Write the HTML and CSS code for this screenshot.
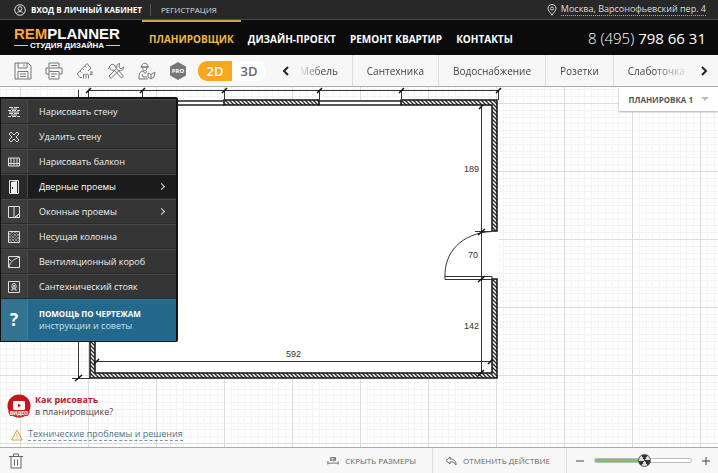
FILE: index.html
```
<!DOCTYPE html>
<html lang="ru">
<head>
	<title>Remplanner</title>
	<meta charset="utf-8">
	<meta name="viewport" content="width=device-width, initial-scale=1">
	<link rel="stylesheet" href="styles.css">
</head>
<body>
<div class="topbar">
	<svg class="user" width="12" height="12" viewBox="0 0 12 12"><circle cx="6" cy="6" r="5.3"/><circle cx="6" cy="4.6" r="1.9"/><path d="M2.5 9.8c.4-3 6.6-3 7 0"/></svg>
	<a class="login" href="#">ВХОД В ЛИЧНЫЙ КАБИНЕТ</a>
	<a class="reg" href="#">РЕГИСТРАЦИЯ</a>
	<svg class="pin" width="10" height="12" viewBox="0 0 10 12"><path d="M5 11.2C3.5 8.6 1 7 1 4.6a4 4 0 0 1 8 0C9 7 6.500 8.600 5 11.200z"/><circle cx="5" cy="4.600" r="1.500"/></svg>
	<a class="address" href="#">Москва, Варсонофьевский пер. 4</a>
</div>

<header class="header">
	<a class="logo" href="#">
		<span class="logo-name"><b>REM</b>PLANNER</span>
		<span class="logo-sub">СТУДИЯ ДИЗАЙНА</span>
	</a>
	<nav class="nav">
		<a class="active" href="#">ПЛАНИРОВЩИК</a>
		<a href="#">ДИЗАЙН-ПРОЕКТ</a>
		<a href="#">РЕМОНТ КВАРТИР</a>
		<a href="#">КОНТАКТЫ</a>
	</nav>
	<div class="phone"><span>8 (495)</span> 798 66 31</div>
</header>

<div class="toolbar">
	<div class="tools">
		<button type="button" aria-label="Сохранить"><svg width="18" height="18" viewBox="0 0 18 18"><path d="M1 1h13l3 3v13H1zM4 1v5h9V1M10 2.500v2M4 17V9.500h10V17M6 12h6M6 14.500h6"/></svg></button>
		<button type="button" aria-label="Печать"><svg width="18" height="18" viewBox="0 0 18 18"><path d="M4 6V1h10v5M4 12H1V6h16v6h-3M4 9.500h10V17H4zM6 12h6M6 14.500h4M3 8h2M6 3.500h6"/></svg></button>
		<button type="button" aria-label="Площадь"><svg width="18" height="18" viewBox="0 0 18 18"><path d="M6 15.500H4L1 12 11 1.500l4 4.500-3 3M4 9l1.500 1.500M6.500 6.500L8 8M9 4l1.500 1.500M7.500 16.500V12M7.500 13c1-1.500 2.500-1 2.500.5v3M10 13c1-1.500 2.500-1 2.500.5v3M14 10h2.500L14 12.500h2.500"/></svg></button>
		<button type="button" aria-label="Инструменты"><svg width="18" height="18" viewBox="0 0 18 18"><path d="M2 5l3-3 3 1.500 1 2.500 7.500 8-2 2-7.500-8-2 .5L3.500 7zM1 7l2.500-2M12.500 1.500c-3 .5-3 3-2.500 4.500L2 14l2 2.500 8-8c2 .5 4.500 0 4.500-3.500l-2.500 2-2-2z"/></svg></button>
		<button type="button" aria-label="Мастер"><svg width="18" height="18" viewBox="0 0 18 18"><path d="M3.500 5C3.500 0 10 0 10 5zM2.500 5H11M4.500 5c0 5 4.500 5 4.500 0M5 9c-3 .5-4 2-4 8h9M5 9l2 2.500L9 9M4 12l1 3h4M10 11l3 1.500L17 10l-1 5-3 2-3-2zM13 12.500V17"/></svg></button>
		<button type="button" aria-label="PRO"><svg class="pro" width="18" height="18" viewBox="0 0 18 18"><path d="M9 0l8 4.500v9L9 18l-8-4.500v-9z"/><text x="9" y="11">PRO</text></svg></button>
	</div>
	<div class="mode">
		<button class="on" type="button">2D</button>
		<button type="button">3D</button>
	</div>
	<button class="arrow" type="button" aria-label="Назад"><svg width="8" height="10" viewBox="0 0 8 10"><path d="M6 1L2 5l4 4"/></svg></button>
	<div class="tabs">
		<a href="#">Мебель</a>
		<a href="#">Сантехника</a>
		<a href="#">Водоснабжение</a>
		<a href="#">Розетки</a>
		<a href="#">Слаботочка</a>
	</div>
	<button class="arrow" type="button" aria-label="Вперёд"><svg width="8" height="10" viewBox="0 0 8 10"><path d="M2 1l4 4-4 4"/></svg></button>
</div>

<main class="canvas">
	<svg class="plan">
		<defs>
			<pattern id="grid" x="20" y="16" width="68" height="68" patternUnits="userSpaceOnUse">
				<path class="minor" d="M7.500 0v68M14.500 0v68M20.500 0v68M27.500 0v68M34.500 0v68M41.500 0v68M48.500 0v68M54.500 0v68M61.500 0v68M0 7.500h68M0 14.500h68M0 20.500h68M0 27.500h68M0 34.500h68M0 41.500h68M0 48.500h68M0 54.500h68M0 61.500h68"/>
				<path class="major" d="M.5 0v68M0 .5h68"/>
			</pattern>
			<pattern id="hatch" width="4" height="4" patternUnits="userSpaceOnUse">
				<path class="hatch" d="M-1 -1l6 6M-1 3l2 2M3 -1l2 2"/>
			</pattern>
		</defs>
		<rect class="paper" width="100%" height="100%"/>

		<!-- room -->
		<path class="floor" d="M89 13h409v279H89z"/>
		<!-- windows -->
		<path class="window" d="M95 14h129M95 18h129M319 14h82M319 18h82"/>
		<!-- walls -->
		<g class="wall">
			<path d="M224 13h95v5h-95z"/>
			<path d="M401 13h96v131h-5V18h-91z"/>
			<path d="M492 192h5v99H90V13h5v273h397z"/>
		</g>
		<!-- door -->
		<path class="line" d="M492 189.500h-47v3h47zM445 190c-1-24 16-44 47-45.500"/>
		<!-- sizes -->
		<path class="line" d="M88 3.500h410M88.500 3v10M142.500 3v10M224.500 3v14M319.500 3v14M401.500 3v14M498.500 3v10"/>
		<path class="tick" d="M86 6l5-5M140 6l5-5M222 6l5-5M317 6l5-5M399 6l5-5M496 6l5-5"/>
		<path class="line" d="M481.500 20v267M95 274.500h397M78.500 3v288M72 291.500h18M475 144.500h17M475 192.500h17"/>
		<path class="tick" d="M479 22l4-4M478 148l7-6M478 195l7-6M478 289l6-6M488 277l5-5M94 277l5-5M75 294l7-6"/>
		<text class="size" x="464" y="85">189</text>
		<text class="size" x="468" y="171">70</text>
		<text class="size" x="464" y="242">142</text>
		<text class="size" x="286" y="270">592</text>
	</svg>

	<button class="variant" type="button">ПЛАНИРОВКА 1<i></i></button>

	<div class="menu">
		<a href="#"><span><svg width="12" height="12" viewBox="0 0 12 12"><path d="M1 1.500h4M6 1.500h5M0 4.500h3M4 4.500h4M9 4.500h3M1 7.500h4M6 7.500h5M0 10.500h3M4 10.500h4M9 10.500h3M3 3h6M1 6h10M3 9h6"/></svg></span>Нарисовать стену</a>
		<a href="#"><span><svg width="12" height="12" viewBox="0 0 12 12"><path d="M3 1l3 3 3-3 2 2-3 3 3 3-2 2-3-3-3 3-2-2 3-3-3-3z"/></svg></span>Удалить стену</a>
		<a href="#"><span><svg width="12" height="12" viewBox="0 0 12 12"><path d="M.5 2h11v8H.5zM0 7.500h12M3 2v8M6 2v8M9 2v8"/></svg></span>Нарисовать балкон</a>
		<a class="open" href="#"><span><svg width="12" height="14" viewBox="0 0 12 14"><path d="M1.500 13.500V.5h9v13z"/><path class="full" d="M3 2l6-1v13l-6-1z"/><path class="knob" d="M4.500 7v2"/></svg></span>Дверные проемы<b></b></a>
		<a href="#"><span><svg width="12" height="12" viewBox="0 0 12 12"><path d="M.5.5h11v11H.5zM6 0v12M7 11l4-3M9 9v2"/></svg></span>Оконные проемы<b></b></a>
		<a href="#"><span><svg width="12" height="12" viewBox="0 0 12 12"><path class="thin" d="M1 4l3-3M1 7l6-6M1 10l9-9M3 11l8-8M6 11l5-5M9 11l2-2M1 8l3 3M1 5l6 6M1 2l9 9M4 1l7 7M7 1l4 4"/><path d="M.5.5h11v11H.5z"/></svg></span>Несущая колонна</a>
		<a href="#"><span><svg width="12" height="12" viewBox="0 0 12 12"><path d="M.5.5h11v11H.5zM1 11C2 6 5 4 11 1M1 3l2 2"/></svg></span>Вентиляционный короб</a>
		<a href="#"><span><svg width="12" height="12" viewBox="0 0 12 12"><path d="M.5.5h11v11H.5zM3 9h2V7M9 9H7V7M4 7V4.500a2 2 0 0 1 4 0V7z"/><circle cx="6" cy="5" r=".7"/></svg></span>Сантехнический стояк</a>
		<a class="help" href="#"><span>?</span><em><strong>ПОМОЩЬ ПО ЧЕРТЕЖАМ</strong>инструкции и советы</em></a>
	</div>

	<div class="tips">
		<a class="video" href="#">
			<svg width="24" height="24" viewBox="0 0 24 24"><circle class="disc" cx="12" cy="12" r="11.500"/><rect class="screen" x="6" y="7" width="12" height="9" rx="1"/><path class="disc" d="M11 9.500l3 2-3 2z"/><path class="ribbon" d="M1 17h22l-2 5H3z"/><text x="12" y="21">ВИДЕО</text></svg>
			<span><strong>Как рисовать</strong>в планировщике?</span>
		</a>
		<div class="trouble">
			<svg width="12" height="12" viewBox="0 0 12 12"><path d="M6 1l5.300 10H.7zM6 4.500v3M6 8.500v1.200"/></svg>
			<a href="#">Технические проблемы и решения</a>
		</div>
	</div>
</main>

<footer class="footer">
	<button class="trash" type="button" aria-label="Удалить"><svg width="14" height="16" viewBox="0 0 14 16"><path d="M0 3.500h14M4.500 3V1h5v2M2 4v11h10V4M5.500 6.500v6M8.500 6.500v6"/></svg></button>
	<button class="action" type="button"><svg width="12" height="10" viewBox="0 0 14 10"><path d="M1 5v4M1 7.500h12M13 5v4M4 5V1h6v4M5.500 2v3M7 1.500h2v2H7v1.500h2"/></svg>СКРЫТЬ РАЗМЕРЫ</button>
	<button class="action" type="button"><svg width="12" height="10" viewBox="0 0 12 10"><path d="M5 1L1 4.500 5 8V6c3-.5 5 .5 6 3 .3-4-2-6-6-6z"/></svg>ОТМЕНИТЬ ДЕЙСТВИЕ</button>
	<div class="zoom">
		<button type="button" aria-label="Уменьшить"><svg width="10" height="10" viewBox="0 0 10 10"><path d="M1 5h8"/></svg></button>
		<input type="range" min="0" max="100" value="52" aria-label="Масштаб">
		<button type="button" aria-label="Увеличить"><svg width="10" height="10" viewBox="0 0 10 10"><path d="M1 5h8M5 1v8"/></svg></button>
	</div>
</footer>
</body>
</html>
```
FILE: styles.css
```
*{
	padding: 0;
	margin: 0;
	box-sizing: border-box;
}
body{
	min-height: 100vh;
	display: flex;
	flex-direction: column;
	font-family: "Open Sans", "Noto Sans", sans-serif;
	font-size: 10px;
	color: #444;
	background: #fff;
}
a{
	color: inherit;
	text-decoration: none;
}
button{
	font: inherit;
	color: inherit;
	border: 0;
	background: none;
	cursor: pointer;
}
svg{
	display: block;
	flex: none;
	fill: none;
	stroke: currentColor;
}

/* top line */
.topbar{
	height: 20px;
	padding: 0 12px 0 14px;
	display: flex;
	align-items: center;
	color: #ddd;
	font-size: 8px;
	line-height: 12px;
	background: #282828;
	border-bottom: 1px solid #4a4a4a;
	white-space: nowrap;
}
.login{
	margin-left: 5px;
	padding-right: 8px;
	font-weight: 700;
	color: #fff;
	border-right: 1px solid #555;
}
.reg{
	padding-left: 10px;
}
.pin{
	margin-left: auto;
	margin-right: 4px;
}
.address{
	font-size: 9px;
	border-bottom: 1px dotted #aaa;
}

/* header */
.header{
	height: 35px;
	padding: 0 12px 0 14px;
	display: flex;
	align-items: center;
	color: #fff;
	background: #0b0b0b;
	white-space: nowrap;
}
.logo{
	width: 106px;
	font-family: "Liberation Sans", Arial, sans-serif;
	font-weight: 700;
}
.logo-name{
	display: block;
	font-size: 15px;
	line-height: 16px;
}
.logo-name b{
	color: #f9a72b;
}
.logo-sub{
	display: flex;
	align-items: center;
	gap: 2px;
	font-size: 8px;
	line-height: 8px;
}
.logo-sub::before,
.logo-sub::after{
	content: "";
	flex: 1;
	height: 1px;
	background: #ccc;
}
.nav{
	height: 35px;
	margin-left: 22px;
	display: flex;
	line-height: 34px;
	font-weight: 700;
}
.nav a{
	padding: 2px 7px 0;
}
.nav .active{
	padding-top: 0;
	color: #f0b54a;
	border-top: 2px solid #d6a243;
}
.phone{
	margin-left: auto;
	font-size: 15px;
}
.phone span{
	font-weight: 300;
}

/* toolbar */
.toolbar{
	height: 32px;
	padding: 0 10px 0 14px;
	display: flex;
	align-items: center;
	background: #f7f7f7;
	border-bottom: 1px solid #aaa;
}
.tools{
	display: flex;
	gap: 13px;
	color: #777;
}
.pro{
	fill: #777;
	stroke: none;
}
.pro text{
	fill: #fff;
	font-size: 6px;
	font-weight: 700;
	text-anchor: middle;
}
.mode{
	margin-left: 11px;
	display: flex;
	border-radius: 9px;
	background: #fff;
	font-size: 13px;
	line-height: 20px;
	font-weight: 600;
}
.mode button{
	width: 34px;
	height: 20px;
	color: #666;
}
.mode .on{
	color: #fff;
	background: #faa61f;
	border-radius: 9px 0 0 9px;
}
.arrow{
	margin-left: 16px;
	color: #222;
	stroke-width: 2;
}
.tabs + .arrow{
	margin-left: 8px;
}
.tabs{
	flex: 1;
	height: 31px;
	margin-left: 2px;
	display: flex;
	overflow: hidden;
	line-height: 32px;
	-webkit-mask-image: linear-gradient(to right, transparent 6px, #000 30px, #000 calc(100% - 40px), transparent);
	mask-image: linear-gradient(to right, transparent 6px, #000 30px, #000 calc(100% - 40px), transparent);
}
.tabs a{
	flex: none;
	padding: 0 14px;
	border-right: 1px solid #ddd;
}
.tabs a:first-child{
	padding-left: 8px;
}
.tabs a:last-child{
	border-right: 0;
}

/* drawing */
.canvas{
	flex: 1;
	min-height: 360px;
	position: relative;
	display: flex;
	align-items: flex-end;
}
.plan{
	position: absolute;
	top: 0;
	left: 0;
	width: 100%;
	height: 100%;
}
.paper{
	fill: url(#grid);
	stroke: none;
}
.minor{
	stroke: #f3f3f3;
}
.major{
	stroke: #dcdcdc;
}
.hatch{
	stroke: #222;
	stroke-width: 1.3;
}
.floor{
	fill: #fff;
	stroke: none;
}
.window{
	stroke: #222;
	stroke-width: 1.5;
}
.wall{
	fill: url(#hatch);
	stroke: #151515;
	stroke-width: 1.5;
}
.line{
	stroke: #333;
}
.tick{
	stroke: #111;
	stroke-width: 1.5;
}
.size{
	fill: #333;
	stroke: none;
	font-family: "Liberation Sans", Arial, sans-serif;
	font-size: 9px;
}
.variant{
	position: absolute;
	top: 0;
	right: 0;
	height: 24px;
	padding: 0 9px 0 10px;
	display: flex;
	align-items: center;
	gap: 8px;
	font-size: 8px;
	font-weight: 700;
	color: #555;
	background: #fff;
	box-shadow: 0 1px 2px #aaa;
}
.variant i{
	border: 4px solid transparent;
	border-top-color: #bbb;
	border-bottom: 0;
}

/* menu */
.menu{
	position: absolute;
	top: 10px;
	left: 0;
	width: 178px;
	border: 1px solid #111;
	border-width: 2px 2px 1px 1px;
	border-radius: 0 2px 2px 0;
	background: #353535;
	color: #eee;
	font-size: 9px;
}
.menu a{
	height: 25px;
	display: flex;
	align-items: center;
	border-top: 1px solid #484848;
	border-bottom: 1px solid #292929;
}
.menu span{
	align-self: stretch;
	width: 27px;
	margin-right: 11px;
	display: flex;
	align-items: center;
	justify-content: center;
	color: #ddd;
	background: #3d3d3d;
	border-right: 1px solid #484848;
}
.menu .open{
	color: #fff;
	background: #1c1c1c;
}
.menu .open span{
	background: #292929;
}
.menu b{
	width: 5px;
	height: 5px;
	margin-left: auto;
	margin-right: 12px;
	border: solid #ddd;
	border-width: 1px 1px 0 0;
	transform: rotate(45deg);
}
.full{
	fill: #eee;
	stroke: none;
}
.knob{
	stroke: #222;
}
.thin{
	stroke: #888;
}
.menu .help{
	height: 42px;
	line-height: 12px;
	color: #c5e3f2;
	background: #24688c;
	border-color: #2d7297;
}
.help em{
	font-style: normal;
}
.help strong{
	display: block;
	font-size: 8px;
	color: #fff;
}
.menu .help span{
	font-size: 17px;
	font-weight: 700;
	color: #fff;
	background: #34738f;
	border-color: #3f7e9b;
}

/* tips */
.tips{
	position: relative;
	padding: 0 0 6px 7px;
}
.video{
	display: flex;
	align-items: center;
	gap: 4px;
	font-size: 9px;
	line-height: 12px;
}
.video strong{
	display: block;
	color: #b71c26;
}
.disc{
	fill: #c4161c;
	stroke: none;
}
.screen{
	fill: #fff;
	stroke: none;
}
.ribbon{
	fill: #d8322f;
	stroke: none;
}
.video text{
	fill: #fff;
	stroke: none;
	font-size: 5px;
	font-weight: 700;
	text-anchor: middle;
}
.trouble{
	margin: 10px 0 0 4px;
	display: flex;
	align-items: center;
	gap: 5px;
	font-size: 9px;
	line-height: 12px;
	color: #d9a63a;
}
.trouble a{
	color: #4c7585;
	border-bottom: 1px dashed #7895a0;
}

/* bottom line */
.footer{
	height: 26px;
	padding: 0 7px 0 9px;
	display: flex;
	align-items: center;
	background: #f7f7f7;
	border-top: 1px solid #aaa;
	color: #666;
	font-size: 8px;
}
.trash{
	margin-right: auto;
}
.action{
	height: 25px;
	padding: 0 16px 0 12px;
	display: flex;
	align-items: center;
	gap: 6px;
	border-right: 1px solid #ddd;
}
.zoom{
	margin-left: 8px;
	display: flex;
	align-items: center;
	gap: 9px;
	color: #444;
}
.zoom input{
	-webkit-appearance: none;
	appearance: none;
	width: 98px;
	height: 5px;
	border: 1px solid #bbb;
	border-radius: 3px;
	background: linear-gradient(to right, #82c25d 50%, #fff 50%);
}
.zoom input::-webkit-slider-thumb{
	-webkit-appearance: none;
	width: 13px;
	height: 13px;
	border: 1px solid #555;
	border-radius: 50%;
	background: conic-gradient(#333 30deg, #ddd 30deg 90deg, #333 90deg 150deg, #ddd 150deg 210deg, #333 210deg 270deg, #ddd 270deg 330deg, #333 330deg);
}
```
